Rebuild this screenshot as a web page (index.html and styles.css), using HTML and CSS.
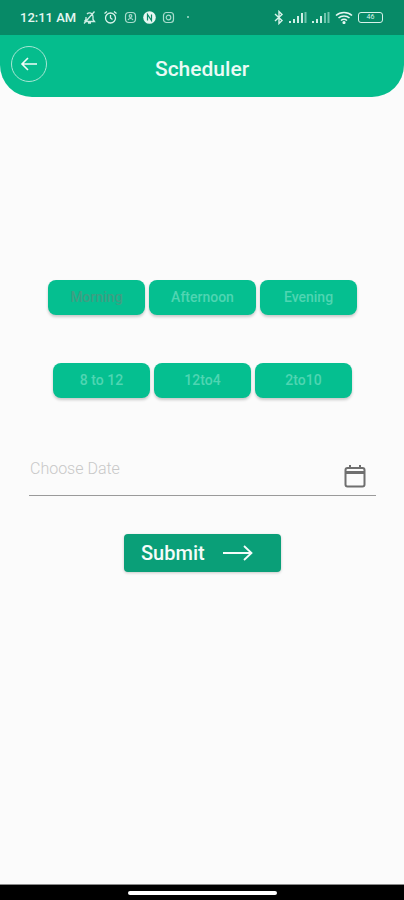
FILE: index.html
```html
<!DOCTYPE html>
<html lang="en">
<head>
<meta charset="utf-8">
<title>Scheduler</title>
<link rel="stylesheet" href="styles.css">
</head>
<body>
<div class="screen">
  <div class="statusbar">
    <div class="status-left">
      <span class="clock">12:11 AM</span>
      <svg class="si" width="15" height="15" viewBox="0 0 15 15" fill="none" stroke="#cfeee5" stroke-width="1.3"><path d="M3 11.500h9.500L11 9.500V6.500A3.500 3.500 0 0 0 5 4M4 7v2.500L2.500 11.500M6 13h3M2 13.500 12.500 1.500"/></svg>
      <svg class="si" width="15" height="15" viewBox="0 0 15 15" fill="none" stroke="#d8f2ea" stroke-width="1.3"><circle cx="7.500" cy="8" r="5"/><path d="M7.500 5v3l2 1.500M1.500 3.500l2.500-2M13.500 3.500l-2.500-2"/></svg>
      <svg class="si" width="13" height="13" viewBox="0 0 13 13" fill="none" stroke="#a9dccd" stroke-width="1.2"><rect x="1.500" y="1.500" width="10" height="10" rx="3.500"/><path d="M4 9c1-2 4-2 5 0"/><circle cx="6.500" cy="5" r="1.300"/></svg>
      <svg class="si" width="13" height="13" viewBox="0 0 13 13"><circle cx="6.500" cy="6.500" r="6.300" fill="#e6f7f2"/><path d="M4.500 9.500V3.500L8.500 9.500V3.500" fill="none" stroke="#078a67" stroke-width="1.2"/></svg>
      <svg class="si" width="13" height="13" viewBox="0 0 13 13" fill="none" stroke="#a9dccd" stroke-width="1.2"><rect x="1.500" y="1.500" width="10" height="10" rx="3"/><circle cx="6.500" cy="6.500" r="2.300"/></svg>
      <span class="dot"></span>
    </div>
    <div class="status-right">
      <svg width="10" height="15" viewBox="0 0 10 15" fill="none" stroke="#d8f2ea" stroke-width="1.400"><path d="M1 4l7 6.500L5 13.500V1.500l3 3L1 11"/></svg>
      <svg width="18" height="11" viewBox="0 0 18 11"><g fill="#cfeee5"><rect x="0" y="9" width="2" height="2"/><rect x="4" y="7" width="2" height="4"/><rect x="8" y="4" width="2" height="7"/><rect x="12" y="1" width="2" height="10"/></g><rect x="15.500" y="0" width="2" height="11" fill="#6fc4ac"/></svg>
      <svg width="18" height="11" viewBox="0 0 18 11"><g fill="#cfeee5"><rect x="0" y="9" width="2" height="2"/><rect x="4" y="7" width="2" height="4"/><rect x="8" y="4" width="2" height="7"/></g><g fill="#6fc4ac"><rect x="12" y="1" width="2" height="10"/><rect x="15.500" y="0" width="2" height="11"/></g></svg>
      <svg width="18" height="13" viewBox="0 0 18 13" fill="none" stroke="#e6f7f2" stroke-width="1.600"><path d="M1 4.500c4.500-4 11.500-4 16 0M3.500 7c3-2.700 8-2.700 11 0M6 9.500c1.700-1.400 4.300-1.400 6 0"/><circle cx="9" cy="11.500" r=".8" fill="#e6f7f2"/></svg>
      <span class="battery"><span class="battery-level">46</span></span>
    </div>
  </div>

  <header class="appbar">
    <button class="back" aria-label="Back">
      <svg width="18" height="16" viewBox="0 0 18 16" fill="none" stroke="#f1fbf8" stroke-width="1.600"><path d="M17 8H2M8 2 2 8l6 6"/></svg>
    </button>
    <h1 class="title">Scheduler</h1>
  </header>

  <main class="content">
    <div class="chips chips-top">
      <button class="chip chip-selected">Morning</button>
      <button class="chip chip-wide">Afternoon</button>
      <button class="chip">Evening</button>
    </div>
    <div class="chips chips-bottom">
      <button class="chip">8 to 12</button>
      <button class="chip">12to4</button>
      <button class="chip">2to10</button>
    </div>
    <div class="datefield">
      <span class="placeholder">Choose Date</span>
      <svg width="26" height="26" viewBox="0 0 26 26" fill="none" stroke="#6f6f6f"><path d="M3.500 9.500h19" stroke-width="3"/><rect x="3.500" y="5" width="19" height="18.500" rx="2" stroke-width="2"/><path d="M8 2v4M18 2v4" stroke-width="2"/></svg>
    </div>
    <button class="submit">
      <span>Submit</span>
      <svg width="30" height="16" viewBox="0 0 30 16" fill="none" stroke="#f5fcfa" stroke-width="1.800"><path d="M0 8h28M21 1l7.500 7-7.500 7"/></svg>
    </button>
  </main>

  <footer class="navbar"><span class="homebar"></span></footer>
</div>
</body>
</html>
```
FILE: styles.css
```css
* { box-sizing: border-box; }
html, body { margin: 0; padding: 0; }
body { background: #fbfbfb; font-family: Roboto, "Noto Sans", sans-serif; }
button { font-family: inherit; border: 0; padding: 0; }

.screen { width: 404px; height: 900px; display: flex; flex-direction: column; overflow: hidden; }

.statusbar {
  height: 35px; flex: none; background: #078a67; color: #e4f6f1;
  display: flex; justify-content: space-between; align-items: center;
  padding: 0 21px 1px 20px;
}
.status-left, .status-right { display: flex; align-items: center; }
.status-left { gap: 5px; }
.status-right { gap: 5px; }
.clock { font-size: 13px; font-weight: 500; margin-right: 1px; }
.si { flex: none; margin-right: 1px; }
.dot { width: 2px; height: 2px; border-radius: 50%; background: #a9dccd; margin-left: 6px; }
.battery {
  width: 25px; height: 11px; border: 1px solid #d8f2ea; border-radius: 3px;
  display: flex; align-items: center; justify-content: center;
}
.battery-level { font-size: 7px; line-height: 1; color: #d8f2ea; }

.appbar {
  height: 62px; flex: none; background: #05bd8d;
  border-radius: 0 0 32px 32px;
  display: flex; align-items: center; justify-content: center; position: relative;
}
.back {
  position: absolute; left: 11px; top: 11px; width: 36px; height: 36px;
  border-radius: 50%; border: 1px solid #a8e6d4; background: transparent;
  display: flex; align-items: center; justify-content: center;
}
.title { margin: 0; font-size: 21px; font-weight: 500; color: #eafaf5; position: relative; top: 3px; }

.content { flex: 1; display: flex; flex-direction: column; }

.chips { display: flex; gap: 4px; }
.chips-top { margin: 183px 0 0 48px; }
.chips-bottom { margin: 48px 0 0 53px; }
.chip {
  width: 97px; height: 35px; border-radius: 8px; background: #05bf90;
  color: #4fd5b2; font-size: 14px; font-weight: 500; padding-bottom: 2px;
  box-shadow: 0 2px 3px rgba(0,0,0,.2);
}
.chip-wide { width: 107px; }
.chip-selected { color: #3f9e83; }

.datefield {
  margin: 59px 28px 0 29px; height: 39px; border-bottom: 1px solid #9a9a9a;
  display: flex; justify-content: space-between; align-items: flex-start;
  padding: 0 8px 0 1px;
}
.placeholder { font-size: 16px; font-weight: 300; color: #c8c8c8; line-height: 19px; margin-top: 2px; }
.datefield svg { margin-top: 6px; }

.submit {
  align-self: flex-start; margin: 38px 0 0 124px; width: 157px; height: 38px;
  background: #0a9f78; border-radius: 4px; color: #f5fcfa;
  font-size: 20px; font-weight: 500;
  display: flex; align-items: center; gap: 18px; padding-left: 17px;
  box-shadow: 0 1px 3px rgba(0,0,0,.2);
}

.navbar {
  height: 16px; flex: none; background: #000; border-top: 1px solid #8a8a8a;
  display: flex; justify-content: center; padding-top: 6px;
}
.homebar { width: 149px; height: 4px; border-radius: 2px; background: #fff; }
```
